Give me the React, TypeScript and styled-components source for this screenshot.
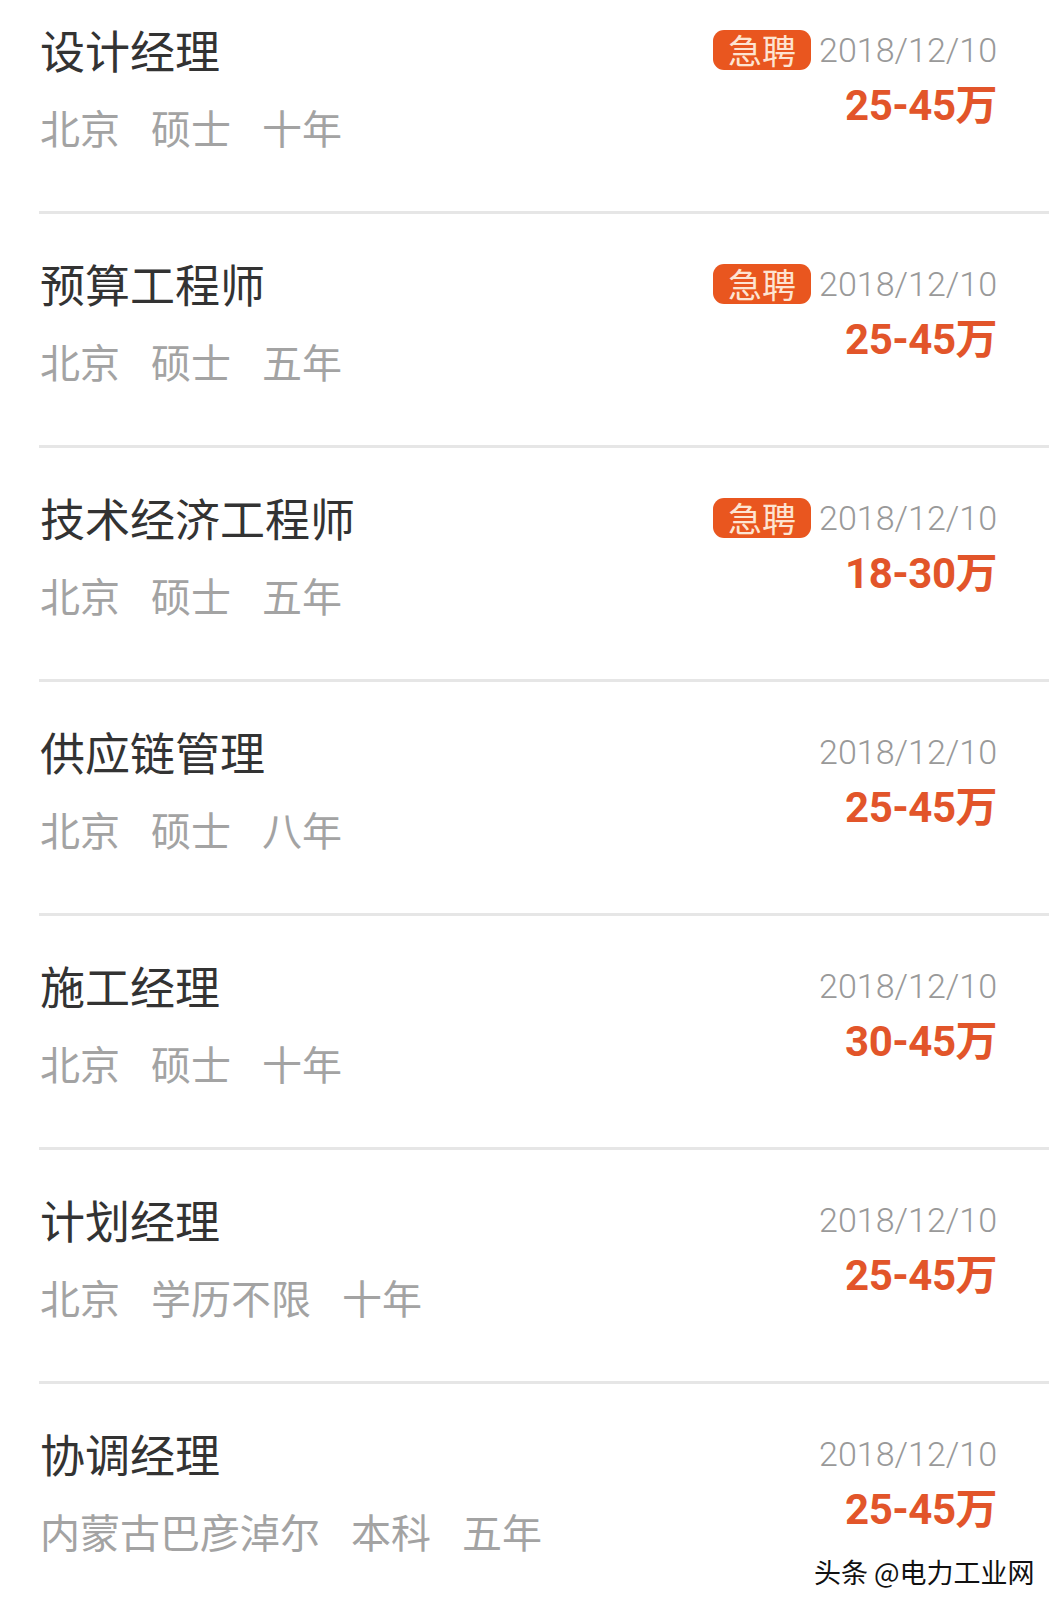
import styled, { createGlobalStyle } from "styled-components";

const GlobalStyle = createGlobalStyle`
  html, body {
    margin: 0;
    padding: 0;
    background: #ffffff;
  }
  body {
    width: 1062px;
    height: 1612px;
    overflow: hidden;
    font-family: "Noto Sans CJK SC", "Noto Sans", sans-serif;
  }
`;

const Page = styled.div`
  position: relative;
  width: 1062px;
  height: 1612px;
  overflow: hidden;
  background: #fff;
`;

const List = styled.ul`
  list-style: none;
  margin: -20px 0 0 0;
  padding: 0;
`;

const Item = styled.li`
  display: flex;
  justify-content: space-between;
  align-items: flex-start;
  box-sizing: content-box;
  height: 191px;
  margin: 0 13px 0 39px;
  padding: 40px 52px 0 1px;
  border-bottom: 3px solid #e6e6e6;
`;

const Left = styled.div`
  display: flex;
  flex-direction: column;
`;

const Title = styled.div`
  font-size: 45px;
  line-height: 60px;
  color: #333333;
`;

const Meta = styled.div`
  display: flex;
  gap: 31px;
  margin-top: 21px;
  font-size: 40px;
  line-height: 52px;
  color: #a3a3a3;
`;

const Right = styled.div`
  display: flex;
  flex-direction: column;
  align-items: flex-end;
`;

const TopLine = styled.div`
  display: flex;
  align-items: center;
  gap: 8px;
  height: 60px;
`;

const Badge = styled.span`
  display: inline-flex;
  align-items: center;
  justify-content: center;
  width: 98px;
  height: 40px;
  border-radius: 11px;
  background: #e9561f;
  color: #fde4d2;
  font-size: 34px;
  line-height: 1;
`;

const DateText = styled.span`
  font-family: "Roboto", "Noto Sans CJK SC", sans-serif;
  font-weight: 300;
  font-size: 34px;
  color: #999999;
`;

const Salary = styled.div`
  margin-top: 5px;
  font-family: "Roboto", "Noto Sans CJK SC", sans-serif;
  font-weight: 700;
  font-size: 42px;
  line-height: 42px;
  color: #e2552a;
  letter-spacing: -0.5px;
`;

const Watermark = styled.div`
  position: absolute;
  left: 814px;
  top: 1552px;
  font-size: 27px;
  line-height: 40px;
  color: #111;
  text-shadow: 1px 1px 0 #fff, -1px 0 0 #fff, 0 -1px 0 #fff;
`;

type Job = {
  title: string;
  meta: string[];
  urgent?: boolean;
  salary: string;
};

const jobs: Job[] = [
  { title: "设计经理", meta: ["北京", "硕士", "十年"], urgent: true, salary: "25-45万" },
  { title: "预算工程师", meta: ["北京", "硕士", "五年"], urgent: true, salary: "25-45万" },
  { title: "技术经济工程师", meta: ["北京", "硕士", "五年"], urgent: true, salary: "18-30万" },
  { title: "供应链管理", meta: ["北京", "硕士", "八年"], salary: "25-45万" },
  { title: "施工经理", meta: ["北京", "硕士", "十年"], salary: "30-45万" },
  { title: "计划经理", meta: ["北京", "学历不限", "十年"], salary: "25-45万" },
  { title: "协调经理", meta: ["内蒙古巴彦淖尔", "本科", "五年"], salary: "25-45万" },
];

export default function App() {
  return (
    <Page>
      <GlobalStyle />
      <List>
        {jobs.map((job, i) => (
          <Item key={i}>
            <Left>
              <Title>{job.title}</Title>
              <Meta>
                {job.meta.map((m) => (
                  <span key={m}>{m}</span>
                ))}
              </Meta>
            </Left>
            <Right>
              <TopLine>
                {job.urgent && <Badge>急聘</Badge>}
                <DateText>2018/12/10</DateText>
              </TopLine>
              <Salary>{job.salary}</Salary>
            </Right>
          </Item>
        ))}
      </List>
      <Watermark>头条 @电力工业网</Watermark>
    </Page>
  );
}
